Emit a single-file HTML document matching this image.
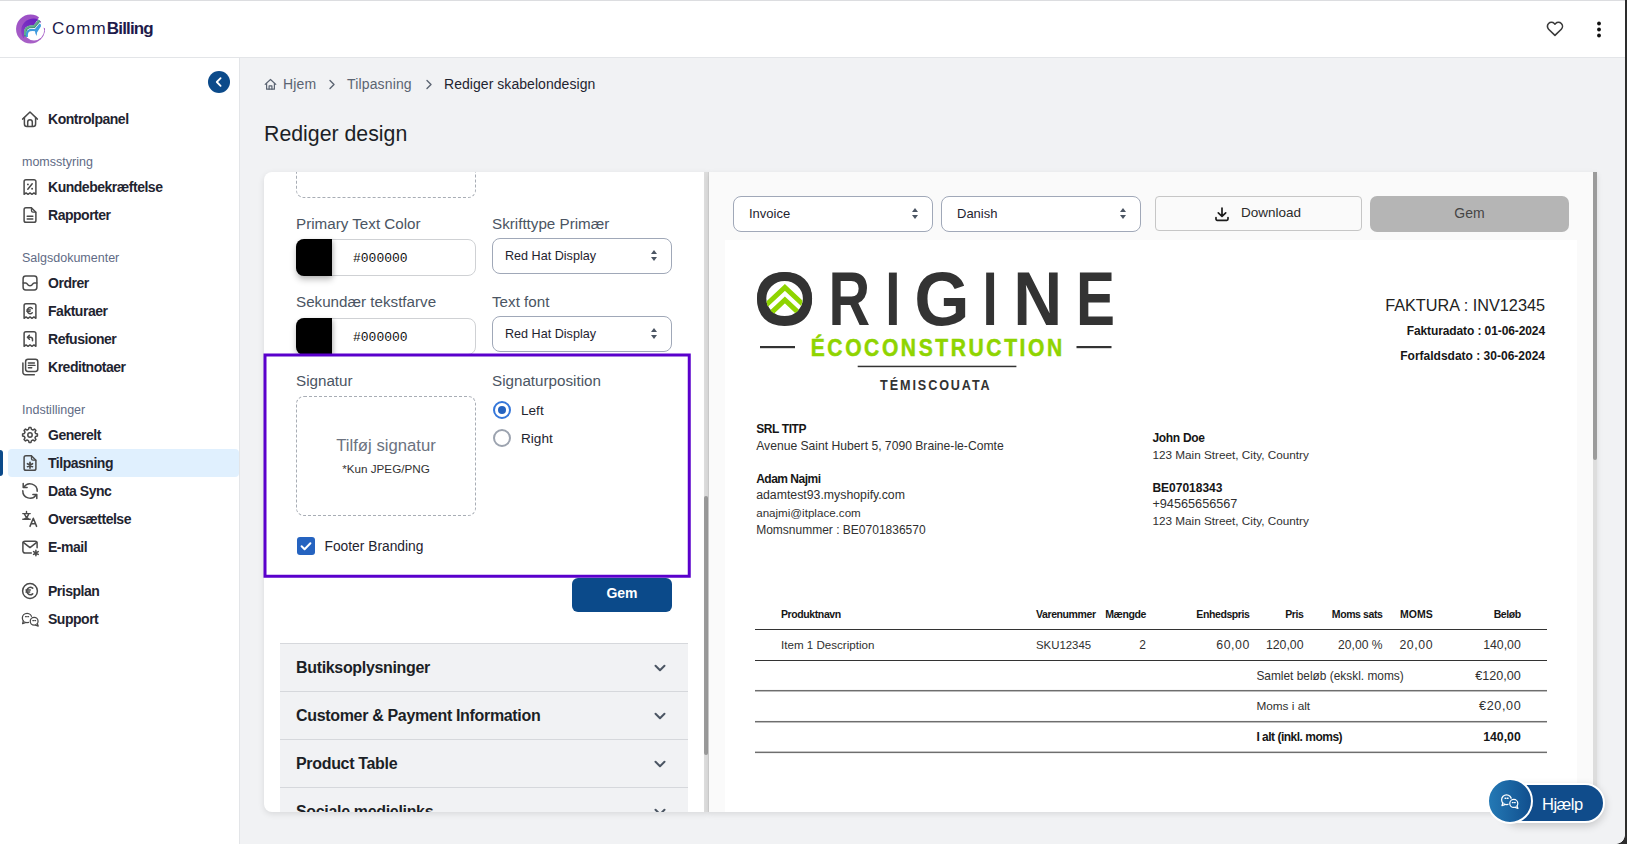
<!DOCTYPE html>
<html lang="da">
<head>
<meta charset="utf-8">
<title>Rediger design</title>
<style>
*{box-sizing:border-box;margin:0;padding:0}
html,body{width:1627px;height:844px;overflow:hidden;background:#f1f2f4;font-family:"Liberation Sans",sans-serif;color:#1f2937}
.abs{position:absolute}
#app{position:relative;width:1627px;height:844px;overflow:hidden;background:#f1f2f4}
/* header */
#hdr{position:absolute;left:0;top:0;width:1627px;height:58px;background:#fff;border-bottom:1px solid #e3e5e8}
#brand{position:absolute;left:52px;top:17px;font-size:17px;line-height:24px;color:#1e1b4b;letter-spacing:-0.2px}
#brand b{font-weight:700}
/* sidebar */
#side{position:absolute;left:0;top:58px;width:240px;height:786px;background:#fff;border-right:1px solid #e3e5e8}
.nav{position:absolute;left:48px;height:20px;line-height:20px;font-size:14px;font-weight:700;color:#1f2430;letter-spacing:-0.480px;white-space:nowrap}
.sec{position:absolute;left:22px;height:18px;line-height:18px;font-size:12.500px;color:#5f6b85;white-space:nowrap}
.ico{position:absolute;left:20px;width:20px;height:20px}
.ico svg{display:block;width:20px;height:20px;fill:none;stroke:#4a4a4a;stroke-width:1.5;stroke-linecap:round;stroke-linejoin:round}
#active{position:absolute;left:8px;top:449px;width:231px;height:28px;background:#e0f0fe;border-radius:4px}
#activebar{position:absolute;left:0;top:450px;width:3px;height:26px;background:#0b4a8a;border-radius:0 3px 3px 0}
#collapse{position:absolute;left:208px;top:13px;width:22px;height:22px;border-radius:50%;background:#0b4a8a}
#collapse svg{display:block;width:22px;height:22px;fill:none;stroke:#fff;stroke-width:1.8;stroke-linecap:round;stroke-linejoin:round}
/* breadcrumb */
.bc{position:absolute;top:74px;height:20px;line-height:20px;font-size:14px;color:#5b6472;white-space:nowrap;letter-spacing:.150px}
#title{position:absolute;left:264px;top:120px;font-size:21.300px;line-height:28px;color:#1c1f26;white-space:nowrap}
/* cards */
#lcard{position:absolute;left:264px;top:172px;width:445px;height:640px;background:#fff;border-radius:8px 0 0 8px;overflow:hidden;box-shadow:0 2px 6px rgba(0,0,0,.10)}
#rcard{position:absolute;left:709px;top:172px;width:888px;height:640px;background:#fafafa;overflow:hidden;box-shadow:0 2px 6px rgba(0,0,0,.10)}
.lbl{position:absolute;font-size:15.2px;line-height:20px;color:#4b5563;white-space:nowrap}
.dash{position:absolute;border:1px dashed #a8adb5;border-radius:8px;background:#fff}
.cin{position:absolute;width:180px;height:37px;border:1px solid #cfd1d4;border-radius:8px;background:#fff}
.cin i{position:absolute;left:-1px;top:-1px;width:36px;height:37px;background:#000;border-radius:8px 0 0 8px;box-shadow:0 4px 6px rgba(0,0,0,.22),2px 1px 4px rgba(0,0,0,.12)}
.cin span{position:absolute;left:56px;top:9px;font:13px/20px "Liberation Mono",monospace;color:#111}
.sel{position:absolute;height:36px;border:1px solid #a0a8b8;border-radius:8px;background:#fff;font-size:12.6px;line-height:34px;color:#1f2430;padding-left:12px;white-space:nowrap}
.sel:after,.sel:before{content:"";position:absolute;right:14.250px;border-left:3.750px solid transparent;border-right:3.750px solid transparent}
.sel:before{top:11.250px;border-bottom:4.250px solid #4b5563}
.sel:after{top:18px;border-top:4.250px solid #4b5563}
.acc{position:absolute;left:16px;width:408px;height:48px;background:#f1f2f4;border-top:1px solid #d6d8dc;font-size:16px;font-weight:700;line-height:47px;padding-left:16px;color:#1c1f26;letter-spacing:-0.33px;white-space:nowrap}
.acc svg{position:absolute;left:373px;top:17px;width:14px;height:14px;fill:none;stroke:#4b5563;stroke-width:2;stroke-linecap:round;stroke-linejoin:round}
#hl{position:absolute;left:263.300px;top:353.300px;width:427.700px;height:224.700px;border:3.500px solid #5a00cc}
.radio{position:absolute;width:18px;height:18px;border-radius:50%;border:2px solid #9ca3af;background:#fff}
.radio.on{border-color:#3577da}
.radio.on:after{content:"";position:absolute;left:3px;top:3px;width:8px;height:8px;border-radius:50%;background:#2563c0}
.rl{font-size:13.600px;line-height:20px;color:#1f2430;white-space:nowrap}
#chk{position:absolute;left:33px;top:365px;width:18px;height:18px;border-radius:3px;background:#2563c0}
#chk svg{display:block;width:18px;height:18px;fill:none;stroke:#fff;stroke-width:2;stroke-linecap:round;stroke-linejoin:round}
#gem1{position:absolute;left:308px;top:406px;width:100px;height:34px;border-radius:6px;background:#0b4a8a;color:#fff;font-size:14px;font-weight:700;line-height:30px;text-align:center}
/* invoice */
#paper{position:absolute;left:16px;top:68px;width:852px;height:572px;background:#fff;color:#222}
.t{position:absolute;white-space:nowrap;font-size:12px;line-height:16px;color:#303030}
.tb{font-weight:700;color:#161616}
.r{text-align:right}
.ln{position:absolute;left:30px;width:792px;height:1px;background:#3a3a3a}
#dl{position:absolute;left:446px;top:24px;width:207px;height:34.500px;border:1px solid #c6c6c6;border-radius:4px;background:#fafafa}
#dl svg{position:absolute;left:58px;top:8.500px;width:16px;height:16px;fill:none;stroke:#1c1c1c;stroke-width:1.700;stroke-linecap:round;stroke-linejoin:round}
#dl span{position:absolute;left:85px;top:6px;font-size:13.500px;line-height:20px;color:#2b2b2b}
#gem2{position:absolute;left:661px;top:24px;width:199px;height:36px;border-radius:7px;background:#b5b5b5;color:#454545;font-size:14px;line-height:35px;text-align:center}
#helpp{position:absolute;left:1500px;top:783px;width:105px;height:40px;padding-top:1px;border-radius:20px;border:2px solid #fff;background:#104c8b;color:#fff;font-size:16.500px;line-height:37px;padding-left:40px;letter-spacing:-.5px;box-shadow:0 3px 8px rgba(0,0,0,.18)}
#helpc{position:absolute;left:1487px;top:778px;width:46px;height:46px;border-radius:50%;border:2px solid #fff;background:linear-gradient(90deg,#2479b5,#114f8e)}
#helpc svg{position:absolute;left:10px;top:10.500px;width:21px;height:21px;fill:none;stroke:#fff;stroke-width:1.400;stroke-linecap:round;stroke-linejoin:round}
</style>
</head>
<body>
<div id="app">
<div id="hdr">
<div class="abs" style="left:0;top:0;width:1627px;height:1px;background:#dcdde0"></div>
<svg class="abs" style="left:12px;top:10px" width="38" height="38" viewBox="0 0 844 844">
<defs><linearGradient id="lg1" x1="0" y1="0" x2="0" y2="1"><stop offset="0" stop-color="#9c50c6"/><stop offset="1" stop-color="#a860c6"/></linearGradient>
<clipPath id="lc1"><circle cx="480" cy="464" r="277"/></clipPath><linearGradient id="lg2" x1="1" y1="0" x2="0" y2="1"><stop offset="0" stop-color="#5f18bf"/><stop offset=".6" stop-color="#7a30c2"/><stop offset="1" stop-color="#9c50c6"/></linearGradient></defs>
<circle cx="412" cy="422" r="322" fill="url(#lg1)"/>
<circle cx="490" cy="450" r="225" fill="#fff"/>
<path d="M572 212L485 338Q335 342 292 400Q262 450 266 540L270 620L120 620L120 80L612 80Z" fill="url(#lg2)" clip-path="url(#lc1)"/>
<path d="M606 148L570 214L640 250L660 380L740 412L844 424L844 0L606 0Z" fill="#fff"/>
<path d="M296 585Q284 452 330 408Q380 366 492 374L612 232" fill="none" stroke="#3f8c6e" stroke-width="56"/>
<path d="M290 560Q280 440 326 398Q378 356 488 362L604 226" fill="none" stroke="#62ad90" stroke-width="42"/>
<path d="M330 600Q322 505 356 470Q410 428 522 448L628 316" fill="none" stroke="#3f9bdd" stroke-width="46"/>
<path d="M505 440L622 306L644 362L556 500L546 580L520 520Z" fill="#3f9bdd"/>
</svg>
<div id="brand"><span style="letter-spacing:1.200px">Comm</span><b style="letter-spacing:-.850px">Billing</b></div>
<svg class="abs" style="left:1544px;top:18px" width="22" height="22" viewBox="0 0 22 22" fill="none" stroke="#3a3a3a" stroke-width="1.600" stroke-linejoin="round"><path d="M10.950 17.400L4.600 11.200a4 4 0 0 1 5.700-5.700l.650.650.650-.650a4 4 0 0 1 5.700 5.700z"/></svg>
<svg class="abs" style="left:1594px;top:18.700px" width="10" height="22" viewBox="0 0 10 22" fill="#111"><circle cx="5" cy="4.500" r="1.900"/><circle cx="5" cy="10.500" r="1.900"/><circle cx="5" cy="16.500" r="1.900"/></svg>
</div>

<div id="side">
<div id="active" style="top:391px"></div><div id="activebar" style="top:392px"></div>
<div class="ico" style="top:51px"><svg viewBox="0 0 20 20"><path d="M2.6 10.1L10 3l7.4 7.1"/><path d="M4.4 8.6v6.3a2.5 2.5 0 0 0 2.5 2.5h6.2a2.5 2.5 0 0 0 2.5-2.5V8.6"/><path d="M7.7 17.2v-4.1a2.3 2.3 0 0 1 4.6 0v4.1"/></svg></div><div class="nav" style="top:51px">Kontrolpanel</div>
<div class="ico" style="top:119px"><svg viewBox="0 0 20 20"><path d="M4.100 17.300V4.600a1.850 1.850 0 0 1 1.850-1.850h8.100a1.850 1.850 0 0 1 1.850 1.850v12.700l-1.970-1.400-1.970 1.400-1.960-1.400-1.970 1.400-1.970-1.400z"/><path d="M12.2 6.8L7.8 12.2"/><circle cx="7.9" cy="7.4" r=".95" fill="#4a4a4a" stroke="none"/><circle cx="12.1" cy="11.7" r=".95" fill="#4a4a4a" stroke="none"/></svg></div><div class="nav" style="top:119px">Kundebekræftelse</div>
<div class="ico" style="top:147px"><svg viewBox="0 0 20 20"><path d="M5.950 2.750h5.400l4.550 4.550v8.100a1.850 1.850 0 0 1-1.850 1.850H5.950a1.850 1.850 0 0 1-1.850-1.850V4.600a1.850 1.850 0 0 1 1.850-1.850z"/><path d="M11.500 3v2.800a1.400 1.400 0 0 0 1.400 1.400h2.800" stroke-width="1.300"/><path d="M7.2 11.2h5.6M7.2 14h5.6"/></svg></div><div class="nav" style="top:147px">Rapporter</div>
<div class="ico" style="top:215px"><svg viewBox="0 0 20 20"><rect x="3.1" y="3.1" width="13.8" height="13.8" rx="2.6"/><path d="M3.2 10h2.6c.9 0 1.2.5 1.6 1.2.5 1 1.3 1.6 2.6 1.6s2.100-.6 2.6-1.6c.4-.7.7-1.200 1.600-1.200h2.600"/></svg></div><div class="nav" style="top:215px">Ordrer</div>
<div class="ico" style="top:243px"><svg viewBox="0 0 20 20"><path d="M4.100 17.300V4.600a1.850 1.850 0 0 1 1.850-1.850h8.100a1.850 1.850 0 0 1 1.850 1.850v12.700l-1.970-1.400-1.970 1.400-1.960-1.400-1.970 1.400-1.970-1.400z"/><path d="M12.3 7.400a3 3 0 1 0 0 4.400M6.900 8.900h3.600M6.900 10.400h3.100" stroke-width="1.400"/></svg></div><div class="nav" style="top:243px">Fakturaer</div>
<div class="ico" style="top:271px"><svg viewBox="0 0 20 20"><path d="M4.100 17.300V4.600a1.850 1.850 0 0 1 1.850-1.850h8.100a1.850 1.850 0 0 1 1.850 1.850v12.700l-1.970-1.400-1.970 1.400-1.960-1.400-1.970 1.400-1.970-1.400z"/><path d="M7.600 8.300h3a1.900 1.900 0 0 1 1.900 1.900v1.600M9.400 6.300l-2 2 2 2" stroke-width="1.500"/></svg></div><div class="nav" style="top:271px">Refusioner</div>
<div class="ico" style="top:299px"><svg viewBox="0 0 20 20"><rect x="5.600" y="2.300" width="12.200" height="12.200" rx="2.400"/><path d="M2.900 6v9.300a2.400 2.400 0 0 0 2.400 2.400h9"/><path d="M8.400 6h6M8.400 8.400h6.600M8.400 10.800h3.400" stroke-width="1.400"/></svg></div><div class="nav" style="top:299px">Kreditnotaer</div>
<div class="ico" style="top:367px"><svg viewBox="0 0 20 20"><path d="M15.61 8.51 L17.43 9.00 L17.43 11.00 L15.61 11.49 L15.02 12.91 L15.96 14.55 L14.55 15.96 L12.91 15.02 L11.49 15.61 L11.00 17.43 L9.00 17.43 L8.51 15.61 L7.09 15.02 L5.45 15.96 L4.04 14.55 L4.98 12.91 L4.39 11.49 L2.57 11.00 L2.57 9.00 L4.39 8.51 L4.98 7.09 L4.04 5.45 L5.45 4.04 L7.09 4.98 L8.51 4.39 L9.00 2.57 L11.00 2.57 L11.49 4.39 L12.91 4.98 L14.55 4.04 L15.96 5.45 L15.02 7.09Z" stroke-width="1.500"/><circle cx="10" cy="10" r="2.200"/></svg></div><div class="nav" style="top:367px">Generelt</div>
<div class="ico" style="top:395px"><svg viewBox="0 0 20 20"><path d="M5.950 2.750h5.400l4.550 4.550v8.100a1.850 1.850 0 0 1-1.850 1.850H5.950a1.850 1.850 0 0 1-1.850-1.850V4.600a1.850 1.850 0 0 1 1.850-1.850z"/><path d="M11.500 3v2.800a1.400 1.400 0 0 0 1.400 1.400h2.800" stroke-width="1.300"/><path d="M10.00 9.30L10.00 15.10M12.51 10.75L7.49 13.65M12.51 13.65L7.49 10.75" stroke-width="1.700"/></svg></div><div class="nav" style="top:395px">Tilpasning</div>
<div class="ico" style="top:423px"><svg viewBox="0 0 20 20"><path d="M17.200 10.200a7.200 7.200 0 0 0-13.300-4"/><path d="M3.200 2.600v3.900h3.900"/><path d="M2.800 9.800a7.200 7.200 0 0 0 13.300 4"/><path d="M16.800 17.400v-3.900h-3.900"/></svg></div><div class="nav" style="top:423px">Data Sync</div>
<div class="ico" style="top:451px"><svg viewBox="0 0 20 20"><path d="M2.800 4.600h7.400M6.500 2.500v2.100M2.800 10.300h7.400M4.300 4.800c.6 2.100 2.200 4 4.500 5.300M8.700 4.800c-.5 2.200-1.900 4.100-4.600 5.400" stroke-width="1.400"/><path d="M10 17.400l3.300-8.200 3.300 8.200M11.200 14.800h4.200"/></svg></div><div class="nav" style="top:451px">Oversættelse</div>
<div class="ico" style="top:479px"><svg viewBox="0 0 20 20"><path d="M11.300 16H5a2.100 2.100 0 0 1-2.100-2.100V6.300A2.100 2.100 0 0 1 5 4.200h10a2.100 2.100 0 0 1 2.100 2.100v4.400"/><path d="M3.300 5.300L10 10.600l6.700-5.300"/><path d="M15.90 13.30L15.90 18.70M18.24 14.65L13.56 17.35M18.24 17.35L13.56 14.65" stroke-width="1.500"/></svg></div><div class="nav" style="top:479px">E-mail</div>
<div class="ico" style="top:523px"><svg viewBox="0 0 20 20"><circle cx="10" cy="10" r="7.400"/><path d="M12.700 7.200a3.600 3.600 0 1 0 0 5.600M6 9.100h4.300M6 10.900h3.700" stroke-width="1.500"/></svg></div><div class="nav" style="top:523px">Prisplan</div>
<div class="ico" style="top:551px"><svg viewBox="0 0 20 20"><circle cx="7.050" cy="9" r="4.700" stroke-width="1.300"/><path d="M3.300 12l-.700 2.600 2.700-1" stroke-width="1.300" fill="#fff"/><circle cx="14.150" cy="12.250" r="5.300" fill="#fff" stroke="none"/><circle cx="14.150" cy="12.250" r="3.900" stroke-width="1.300"/><path d="M17.300 14.700l.900 2.400-2.600-.900" stroke-width="1.300" fill="#fff"/><path d="M5.500 7.700h.900M7.700 7.700h.900M12.800 11.600h.800M14.800 11.600h.800" stroke-width="1.200"/></svg></div><div class="nav" style="top:551px">Support</div>
<div class="sec" style="top:95px">momsstyring</div>
<div class="sec" style="top:191px">Salgsdokumenter</div>
<div class="sec" style="top:343px">Indstillinger</div>
<div id="collapse"><svg viewBox="0 0 22 22"><path d="M12.600 7.200L8.800 11l3.800 3.800"/></svg></div>
</div>
<svg class="abs" style="left:264px;top:78px" width="13" height="13" viewBox="0 0 13 13" fill="none" stroke="#5b6472" stroke-width="1.200" stroke-linejoin="round" stroke-linecap="round"><path d="M1.200 6.400L6.500 1.500l5.300 4.900"/><path d="M2.600 5.400v5.800h7.800V5.400"/><path d="M5.100 11.200V7.800h2.800v3.400"/></svg>
<div class="bc" style="left:283px">Hjem</div>
<svg class="abs" style="left:327px;top:78px" width="10" height="13" viewBox="0 0 10 13" fill="none" stroke="#5b6472" stroke-width="1.400" stroke-linecap="round" stroke-linejoin="round"><path d="M3 2.500l4 4-4 4"/></svg>
<div class="bc" style="left:347px">Tilpasning</div>
<svg class="abs" style="left:424px;top:78px" width="10" height="13" viewBox="0 0 10 13" fill="none" stroke="#5b6472" stroke-width="1.400" stroke-linecap="round" stroke-linejoin="round"><path d="M3 2.500l4 4-4 4"/></svg>
<div class="bc" style="left:444px;color:#1f2430;letter-spacing:.050px">Rediger skabelondesign</div>
<div id="title">Rediger design</div>

<div id="lcard">
<div class="dash" style="left:32px;top:-60px;width:180px;height:86px"></div>
<div class="lbl" style="left:32px;top:42px">Primary Text Color</div>
<div class="lbl" style="left:228px;top:42px">Skrifttype Primær</div>
<div class="cin" style="left:32px;top:67px"><i></i><span>#000000</span></div>
<div class="sel" style="left:228px;top:66px;width:180px">Red Hat Display</div>
<div class="lbl" style="left:32px;top:120px">Sekundær tekstfarve</div>
<div class="lbl" style="left:228px;top:120px">Text font</div>
<div class="cin" style="left:32px;top:146px"><i></i><span>#000000</span></div>
<div class="sel" style="left:228px;top:144px;width:180px">Red Hat Display</div>
<div class="abs" style="left:0;top:182px;width:427px;height:224px;background:#fff"></div>
<div class="lbl" style="left:32px;top:199px">Signatur</div>
<div class="lbl" style="left:228px;top:199px">Signaturposition</div>
<div class="dash" style="left:32px;top:224px;width:180px;height:120px"></div>
<div class="abs" style="left:32px;top:264px;width:180px;text-align:center;font-size:16.700px;line-height:20px;color:#6b7280">Tilføj signatur</div>
<div class="abs" style="left:32px;top:289px;width:180px;text-align:center;font-size:11.700px;line-height:16px;color:#333">*Kun JPEG/PNG</div>
<div class="radio on" style="left:229px;top:229px"></div>
<div class="abs rl" style="left:257px;top:229px">Left</div>
<div class="radio" style="left:229px;top:257px"></div>
<div class="abs rl" style="left:257px;top:257px">Right</div>
<div id="chk"><svg viewBox="0 0 18 18"><path d="M4.600 9.300l3 3 5.800-6"/></svg></div>
<div class="abs" style="left:60.500px;top:365px;font-size:13.800px;line-height:20px;color:#1f2430;white-space:nowrap">Footer Branding</div>
<div id="gem1">Gem</div>
<div class="acc" style="top:471px">Butiksoplysninger<svg viewBox="0 0 14 14"><path d="M2.500 4.800L7 9.300l4.500-4.500"/></svg></div>
<div class="acc" style="top:519px">Customer &amp; Payment Information<svg viewBox="0 0 14 14"><path d="M2.500 4.800L7 9.300l4.500-4.500"/></svg></div>
<div class="acc" style="top:567px">Product Table<svg viewBox="0 0 14 14"><path d="M2.500 4.800L7 9.300l4.500-4.500"/></svg></div>
<div class="acc" style="top:615px">Sociale medielinks<svg viewBox="0 0 14 14"><path d="M2.500 4.800L7 9.300l4.500-4.500"/></svg></div>
<div class="abs" style="left:440px;top:0;width:5px;height:640px;background:#dddddd;border-right:1px solid #d2d2d2"></div>
<div class="abs" style="left:440px;top:324px;width:4px;height:259px;background:#9b9b9b;border-radius:2px"></div>
</div>
<svg class="abs" style="left:260px;top:350px" width="436" height="232" viewBox="0 0 436 232"><rect x="5" y="5" width="424.250" height="221.250" fill="none" stroke="#5a00cc" stroke-width="3"/></svg>

<div id="rcard">
<div class="sel" style="left:24px;top:24px;width:200px;padding-left:15px;font-size:13px">Invoice</div>
<div class="sel" style="left:232px;top:24px;width:200px;padding-left:15px;font-size:13px">Danish</div>
<div id="dl"><svg viewBox="0 0 16 16"><path d="M8 2v8.200M4.300 6.800L8 10.400l3.700-3.600M2 11.500v1.600a1.200 1.200 0 0 0 1.200 1.200h9.600a1.200 1.200 0 0 0 1.200-1.200v-1.600"/></svg><span>Download</span></div>
<div id="gem2">Gem</div>
<div id="paper">
<svg class="abs" style="left:0;top:0" width="420" height="170" viewBox="0 0 420 170" font-family="Liberation Sans, sans-serif" font-weight="700">
<title>ORIGINE ÉCOCONSTRUCTION TÉMISCOUATA</title>
<g fill="#333" font-size="76.200"><text transform="translate(28.800 84.800) scale(1.040 1)">O</text><text transform="translate(103.440 84.800) scale(.757 1)">R</text><text transform="translate(160.200 84.800) scale(.720 1)">I</text><text transform="translate(189.350 84.800) scale(.934 1)">G</text><text transform="translate(257.600 84.800) scale(.720 1)">I</text><text transform="translate(288.200 84.800) scale(.890 1)">N</text><text transform="translate(351 84.800) scale(.767 1)">E</text></g>
<ellipse cx="59.600" cy="58.600" rx="22.900" ry="22.100" fill="#fff" stroke="#333" stroke-width="9.200"/>
<clipPath id="cp"><ellipse cx="59.400" cy="58.900" rx="18.200" ry="17.800"/></clipPath>
<g clip-path="url(#cp)" fill="none" stroke="#8fd400" stroke-width="5" stroke-miterlimit="10"><path d="M34.900 70.900l25-23.550 25 23.550"/><path d="M34.900 83.550l25-23.550 25 23.550"/></g>
<rect x="35" y="106" width="35" height="2.200" fill="#333"/><rect x="351.500" y="106" width="35" height="2.200" fill="#333"/>
<text transform="translate(85.700 116) scale(.900 1)" font-size="23.400" fill="#8fd400" stroke="#8fd400" stroke-width=".500" textLength="279.500" lengthAdjust="spacing">ÉCOCONSTRUCTION</text>
<rect x="132.700" y="125.700" width="158.700" height="1.500" fill="#333"/>
<text transform="translate(155.100 150.400) scale(.900 1)" font-size="14" fill="#333" textLength="121.800" lengthAdjust="spacing">TÉMISCOUATA</text>
</svg>
<div class="t " style="top:57.2px;font-size:16.25px;right:32.0px;color:#222;">FAKTURA : INV12345</div>
<div class="t tb" style="top:83.1px;font-size:12px;right:32.0px;letter-spacing:-.1px;">Fakturadato : 01-06-2024</div>
<div class="t tb" style="top:107.7px;font-size:12px;right:32.0px;">Forfaldsdato : 30-06-2024</div>
<div class="t tb" style="top:180.9px;font-size:12px;left:31.2px;letter-spacing:-.4px;">SRL TITP</div>
<div class="t " style="top:198.1px;font-size:12.15px;left:31.2px;">Avenue Saint Hubert 5, 7090 Braine-le-Comte</div>
<div class="t tb" style="top:230.8px;font-size:12px;left:31.2px;letter-spacing:-.5px;">Adam Najmi</div>
<div class="t " style="top:246.5px;font-size:12.3px;left:31.2px;">adamtest93.myshopify.com</div>
<div class="t " style="top:264.9px;font-size:11.6px;left:31.2px;">anajmi@itplace.com</div>
<div class="t " style="top:281.9px;font-size:12px;left:31.2px;">Momsnummer : BE0701836570</div>
<div class="t tb" style="top:189.8px;font-size:12px;left:427.4px;letter-spacing:-.3px;">John Doe</div>
<div class="t " style="top:206.9px;font-size:11.75px;left:427.4px;">123 Main Street, City, Country</div>
<div class="t tb" style="top:239.6px;font-size:12px;left:427.4px;">BE07018343</div>
<div class="t " style="top:255.6px;font-size:12.7px;left:427.4px;">+94565656567</div>
<div class="t " style="top:273.1px;font-size:11.75px;left:427.4px;">123 Main Street, City, Country</div>
<div class="t " style="top:366.0px;font-size:10.5px;left:56.0px;font-weight:700;letter-spacing:-.4px;color:#161616;">Produktnavn</div>
<div class="t " style="top:366.0px;font-size:10.5px;left:311.0px;font-weight:700;letter-spacing:-.4px;color:#161616;">Varenummer</div>
<div class="t " style="top:366.0px;font-size:10.5px;right:431.0px;font-weight:700;letter-spacing:-.4px;color:#161616;">Mængde</div>
<div class="t " style="top:366.0px;font-size:10.5px;right:327.5px;font-weight:700;letter-spacing:-.4px;color:#161616;">Enhedspris</div>
<div class="t " style="top:366.0px;font-size:10.5px;right:273.5px;font-weight:700;letter-spacing:-.4px;color:#161616;">Pris</div>
<div class="t " style="top:366.0px;font-size:10.5px;right:194.5px;font-weight:700;letter-spacing:-.4px;color:#161616;">Moms sats</div>
<div class="t " style="top:366.0px;font-size:10.5px;right:144.3px;font-weight:700;letter-spacing:-.4px;color:#161616;letter-spacing:0;">MOMS</div>
<div class="t " style="top:366.0px;font-size:10.5px;right:56.2px;font-weight:700;letter-spacing:-.4px;color:#161616;">Beløb</div>
<div class="t " style="top:397.2px;font-size:11.6px;left:56.0px;">Item 1 Description</div>
<div class="t " style="top:397.2px;font-size:11.4px;left:311.0px;">SKU12345</div>
<div class="t " style="top:397.0px;font-size:12px;right:431.0px;">2</div>
<div class="t " style="top:396.9px;font-size:12.3px;right:327.0px;letter-spacing:.6px;">60,00</div>
<div class="t " style="top:396.9px;font-size:12.3px;right:273.5px;">120,00</div>
<div class="t " style="top:397.0px;font-size:12.1px;right:194.5px;">20,00 %</div>
<div class="t " style="top:396.9px;font-size:12.3px;right:143.8px;letter-spacing:.6px;">20,00</div>
<div class="t " style="top:396.9px;font-size:12.3px;right:56.2px;">140,00</div>
<div class="t " style="top:427.9px;font-size:11.9px;left:531.4px;">Samlet beløb (ekskl. moms)</div>
<div class="t " style="top:427.6px;font-size:12.6px;right:56.2px;">€120,00</div>
<div class="t " style="top:458.4px;font-size:11.8px;left:531.4px;">Moms i alt</div>
<div class="t " style="top:458.1px;font-size:12.6px;right:55.6px;letter-spacing:.65px;">€20,00</div>
<div class="t tb" style="top:489.3px;font-size:12px;left:531.4px;letter-spacing:-.5px;">I alt (inkl. moms)</div>
<div class="t tb" style="top:489.2px;font-size:12.3px;right:56.2px;">140,00</div>
<svg class="abs" style="left:30px;top:380px" width="792" height="140" viewBox="0 0 792 140"><rect x="0" y="9" width="792" height="1" fill="#333"/><rect x="0" y="40" width="792" height="1" fill="#333"/><rect x="0" y="69.950" width="792" height="1.500" fill="#6e6e6e"/><rect x="0" y="100.950" width="792" height="1.500" fill="#6e6e6e"/><rect x="0" y="131.600" width="792" height="1.500" fill="#6e6e6e"/></svg>
</div>
<div class="abs" style="left:884px;top:0;width:4px;height:640px;background:#dddddd"></div>
<div class="abs" style="left:884px;top:0;width:4px;height:288px;background:#9b9b9b;border-radius:0 0 2px 2px"></div>
</div>
<div id="helpp">Hjælp</div>
<div id="helpc"><svg viewBox="0 0 24 24"><circle cx="8.600" cy="10" r="5.600"/><path d="M4.300 13.700l-.900 3 3.200-1.200" fill="#1c68a6"/><circle cx="16.900" cy="14.200" r="6.200" fill="#18609f" stroke="none"/><circle cx="16.900" cy="14.200" r="4.600"/><path d="M20.600 17.100l1 2.800-3-1" fill="#165a99"/><path d="M6.900 8.300h.9M9.500 8.300h.9M15.300 13.200h.9M17.700 13.200h.9" stroke-width="1.500"/></svg></div>
<div class="abs" style="left:1625px;top:0;width:2px;height:844px;background:#2d2d2d"></div>
<div class="abs" style="left:1616px;top:835px;width:10px;height:9px;background:radial-gradient(circle at 0 0,transparent 8.500px,#2d2d2d 9.200px)"></div>

</div>
</body>
</html>
